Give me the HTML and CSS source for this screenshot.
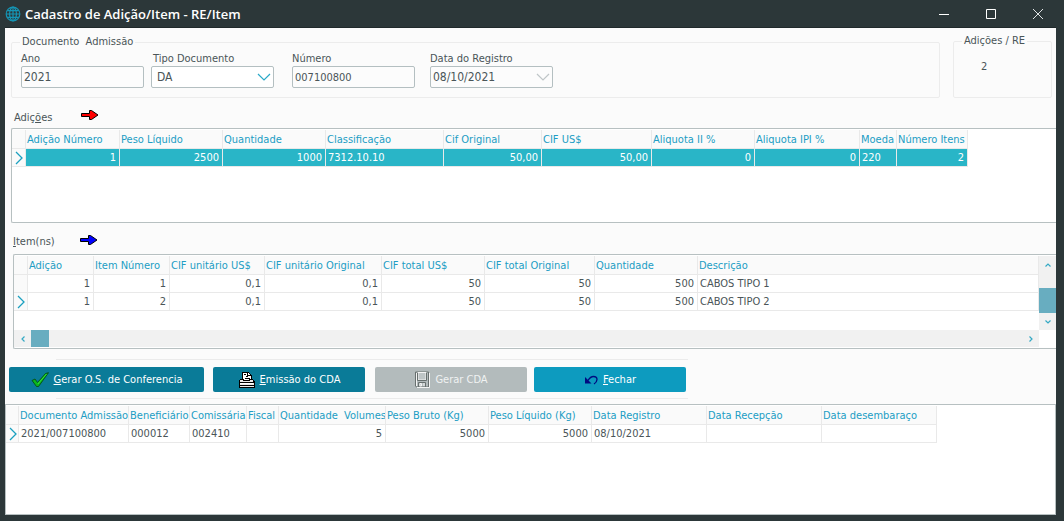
FILE: index.html
```html
<!DOCTYPE html>
<html lang="pt-BR">
<head>
<meta charset="utf-8">
<title>Cadastro de Adição/Item - RE/Item</title>
<link rel="stylesheet" href="styles.css">
</head>
<body>
<header class="titlebar">
  <svg class="globe" width="16" height="16" viewBox="0 0 16 16" aria-hidden="true">
    <g fill="none" stroke="#1595b5" stroke-width="1.2">
      <circle cx="8" cy="8" r="6.8"/><ellipse cx="8" cy="8" rx="3.4" ry="6.8"/>
      <path d="M8 1v14M1 8h14M2.3 4.6h11.4M2.3 11.4h11.4"/>
    </g>
  </svg>
  <h1 class="title">Cadastro de Adição/Item - RE/Item</h1>
  <div class="window-buttons">
    <button type="button" aria-label="Minimizar"><svg width="12" height="12" viewBox="0 0 12 12"><path d="M1 6.5h10" stroke="#fff" fill="none"/></svg></button>
    <button type="button" aria-label="Maximizar"><svg width="12" height="12" viewBox="0 0 12 12"><path d="M1.5 1.5h9v9h-9z" stroke="#fff" fill="none"/></svg></button>
    <button type="button" aria-label="Fechar janela"><svg width="12" height="12" viewBox="0 0 12 12"><path d="M1 1l10 10M11 1L1 11" stroke="#dfe3e4" fill="none"/></svg></button>
  </div>
</header>
<main class="content">
  <div class="top">
    <fieldset class="group group-main">
      <legend>Documento&nbsp; Admissão</legend>
      <div class="fields">
        <div class="field"><label for="ano">Ano</label><input id="ano" class="box" value="2021"></div>
        <div class="field field-type"><label for="tipo">Tipo Documento</label>
          <span class="combo"><select id="tipo" class="box"><option>DA</option></select>
          <svg class="chevron" width="14" height="8" viewBox="0 0 14 8"><path d="M1 1l6 6 6-6" fill="none" stroke="#2aa9c8" stroke-width="1.2"/></svg></span></div>
        <div class="field field-number"><label for="numero">Número</label><input id="numero" class="box box-code" value="007100800"></div>
        <div class="field field-date"><label for="data">Data do Registro</label>
          <span class="combo"><input id="data" class="box box-date" value="08/10/2021">
          <svg class="chevron" width="14" height="8" viewBox="0 0 14 8"><path d="M1 1l6 6 6-6" fill="none" stroke="#bfc6c8" stroke-width="1.2"/></svg></span></div>
      </div>
    </fieldset>
    <fieldset class="group group-count">
      <legend>Adições / RE</legend>
      <output class="count">2</output>
    </fieldset>
  </div>

  <div class="section-head section-additions">
    <h2>Adiç<u>õ</u>es</h2>
    <svg class="arrow" width="18" height="10" viewBox="0 0 18 10"><path d="M.5 3.5h8V.5h2l6.500 4.500-6.500 4.500h-2v-3h-8z" fill="#f00" stroke="#000"/></svg>
  </div>
  <div class="grid grid-additions">
    <table>
      <colgroup><col class="c-mark"><col class="c-94"><col class="c-103"><col class="c-103"><col class="c-118"><col class="c-98"><col class="c-110"><col class="c-103"><col class="c-105"><col class="c-37"><col class="c-71"></colgroup>
      <thead><tr><td></td><th>Adição Número</th><th>Peso Líquido</th><th>Quantidade</th><th>Classificação</th><th>Cif Original</th><th>CIF US$</th><th>Aliquota II %</th><th>Aliquota IPI %</th><th>Moeda</th><th>Número Itens</th></tr></thead>
      <tbody><tr class="selected"><td class="mark"><svg width="8" height="14" viewBox="0 0 8 14"><path d="M1 1l6 6-6 6" fill="none" stroke="#1ba0c0" stroke-width="1.3"/></svg></td><td class="num">1</td><td class="num">2500</td><td class="num">1000</td><td>7312.10.10</td><td class="num">50,00</td><td class="num">50,00</td><td class="num">0</td><td class="num">0</td><td>220</td><td class="num">2</td></tr></tbody>
    </table>
  </div>

  <div class="section-head section-items">
    <h2><u>I</u>tem(ns)</h2>
    <svg class="arrow" width="18" height="10" viewBox="0 0 18 10"><path d="M.5 3.500h8V.5h2l6.500 4.500-6.500 4.500h-2v-3h-8z" fill="#00f" stroke="#000"/></svg>
  </div>
  <div class="grid grid-items">
    <table>
      <colgroup><col class="c-mark"><col class="c-66"><col class="c-76"><col class="c-95"><col class="c-117"><col class="c-103"><col class="c-110"><col class="c-103"><col></colgroup>
      <thead><tr><td></td><th>Adição</th><th>Item Número</th><th>CIF unitário US$</th><th>CIF unitário Original</th><th>CIF total US$</th><th>CIF total Original</th><th>Quantidade</th><th>Descrição</th></tr></thead>
      <tbody>
        <tr><td class="mark"></td><td class="num">1</td><td class="num">1</td><td class="num">0,1</td><td class="num">0,1</td><td class="num">50</td><td class="num">50</td><td class="num">500</td><td>CABOS TIPO 1</td></tr>
        <tr><td class="mark"><svg width="8" height="14" viewBox="0 0 8 14"><path d="M1 1l6 6-6 6" fill="none" stroke="#1ba0c0" stroke-width="1.3"/></svg></td><td class="num">1</td><td class="num">2</td><td class="num">0,1</td><td class="num">0,1</td><td class="num">50</td><td class="num">50</td><td class="num">500</td><td>CABOS TIPO 2</td></tr>
      </tbody>
    </table>
    <div class="vscroll">
      <button type="button" aria-label="Rolar para cima"><svg width="6" height="4" viewBox="0 0 6 4"><path d="M.5 3.500L3 1l2.500 2.500" fill="none" stroke="#35a9c4" stroke-width="1.2"/></svg></button>
      <div class="vtrack"><div class="vthumb"></div></div>
      <button type="button" aria-label="Rolar para baixo"><svg width="6" height="4" viewBox="0 0 6 4"><path d="M.5.5L3 3 5.500.5" fill="none" stroke="#35a9c4" stroke-width="1.2"/></svg></button>
    </div>
    <div class="hscroll">
      <button type="button" aria-label="Rolar para a esquerda"><svg width="4" height="6" viewBox="0 0 4 6"><path d="M3.500.5L1 3l2.500 2.500" fill="none" stroke="#35a9c4" stroke-width="1.2"/></svg></button>
      <div class="htrack"><div class="hthumb"></div></div>
      <button type="button" aria-label="Rolar para a direita"><svg width="4" height="6" viewBox="0 0 4 6"><path d="M.5.5L3 3 .5 5.500" fill="none" stroke="#35a9c4" stroke-width="1.2"/></svg></button>
    </div>
  </div>

  <div class="actions">
    <button type="button" class="action action-wide">
      <svg width="18" height="16" viewBox="0 0 18 16"><path d="M1 8.500l3-1.500 2.500 3.500L14.500 1.500 17.500.7 7.500 14.500H5.500z" fill="#0ab51c" stroke="#04450c" stroke-width=".8"/><path d="M6.800 12L15.500 2" stroke="#35e33a" fill="none"/></svg>
      <span><u>G</u>erar O.S. de Conferencia</span></button>
    <button type="button" class="action action-print">
      <svg width="17" height="17" viewBox="0 0 17 17" shape-rendering="crispEdges"><path d="M4 1h6l3 3v6H4z" fill="#fff" stroke="#000"/><path d="M9.500 1v3.500H13M5.500 3.500h2M7.500 5.500h2M6.500 7.500h5" stroke="#000" fill="none"/><path d="M2.500 8.500h3v1h6v-1h3l1.500 2v5.500H1v-5.500z" fill="#e8e8e8" stroke="#000"/><path d="M1 11.500h15M1 14.500h15" stroke="#000" fill="none"/><path d="M2 12.500h13" stroke="#fff" fill="none"/></svg>
      <span><u>E</u>missão do CDA</span></button>
    <button type="button" class="action action-save" disabled>
      <svg width="16" height="17" viewBox="0 0 16 17"><path d="M1.500 1h13v15h-12l-1-1z" fill="#b3bbbc" stroke="#68706f"/><path d="M4 1.500h8v7.500H4z" fill="#bec5c6" stroke="#f4f4f4"/><path d="M3.500 2v7.500h9V2M4.500 16v-4.500h7V16" fill="none" stroke="#68706f"/><path d="M6 12.500h1.500V15H6zM10 12v3M15.500 2v14.500H3M2.500 2v13" fill="none" stroke="#f4f4f4"/></svg>
      <span>Gerar CDA</span></button>
    <button type="button" class="action action-close">
      <svg width="14" height="10" viewBox="0 0 14 10"><path d="M1 2v6.500h6.500z" fill="#000b80"/><path d="M4 5.500C5.500 3 7 1.500 9.500 1.500c2.500 0 3.500 1.500 3.500 3 0 2-1.500 3.500-3 4.500" fill="none" stroke="#000b80" stroke-width="1.300"/></svg>
      <span><u>F</u>echar</span></button>
  </div>

  <div class="grid grid-documents">
    <table>
      <colgroup><col class="c-mark"><col class="c-110"><col class="c-61"><col class="c-57"><col class="c-32"><col class="c-107"><col class="c-103"><col class="c-103"><col class="c-115"><col class="c-115"><col class="c-115"></colgroup>
      <thead><tr><td></td><th>Documento Admissão</th><th>Beneficiário</th><th>Comissária</th><th>Fiscal</th><th>Quantidade&nbsp; Volumes</th><th>Peso Bruto (Kg)</th><th>Peso Líquido (Kg)</th><th>Data Registro</th><th>Data Recepção</th><th>Data desembaraço</th></tr></thead>
      <tbody><tr><td class="mark"><svg width="8" height="14" viewBox="0 0 8 14"><path d="M1 1l6 6-6 6" fill="none" stroke="#1ba0c0" stroke-width="1.3"/></svg></td><td>2021/007100800</td><td>000012</td><td>002410</td><td></td><td class="num">5</td><td class="num">5000</td><td class="num">5000</td><td>08/10/2021</td><td></td><td></td></tr></tbody>
    </table>
  </div>
</main>
</body>
</html>
```

FILE: styles.css
```css
* { box-sizing: border-box; }
body {
  margin: 0;
  min-height: 100vh;
  display: flex;
  flex-direction: column;
  padding: 0 8px 6px 5px;
  background: #2c3739;
  color: #4a5558;
  font: 11px/14px "DejaVu Sans Condensed", "Noto Sans", sans-serif;
}
button, input, select { font: inherit; color: inherit; margin: 0; }
svg { display: block; flex: none; }

.titlebar { display: flex; align-items: center; height: 28px; gap: 4px; border-bottom: 1px solid #20292b; }
.title { margin: 0; flex: 1; font: 600 13px/18px "Open Sans", sans-serif; color: #fff; }
.window-buttons { display: flex; margin-right: -5px; }
.window-buttons button { width: 47px; height: 27px; padding: 0; border: 0; background: none; display: flex; align-items: center; justify-content: center; }

.content { flex: 1; display: flex; flex-direction: column; background: #fbfbfb; }
.top { display: flex; align-items: flex-end; gap: 13px; padding: 6px 4px 0 6px; }
.group { margin: 0; padding: 0; border: 1px solid #ececec; border-radius: 2px; min-width: 0; }
.group-main { flex: 1; }
.group-count { width: 99px; }
.group legend { margin-left: 8px; padding: 0 2px; white-space: pre; }
.fields { display: flex; padding: 3px 9px 9px; }
.field { display: flex; flex-direction: column; width: 123px; }
.field-type { margin-left: 7px; }
.field-type label { padding-left: 2px; }
.field-number { margin-left: 18px; }
.field-date { margin-left: 15px; }
.box { width: 100%; height: 22px; padding: 0 2px; border: 1px solid #b4bfc1; border-radius: 2px; background: #fcfcfc; outline: 0; appearance: none; font-size: 12px; }
.box-code { font-size: 11px; }
.combo { display: grid; align-items: center; }
.combo > * { grid-area: 1 / 1; }
select.box { background: #fff; padding-left: 5px; }
.chevron { justify-self: end; margin-right: 3px; pointer-events: none; }
.count { display: block; padding: 12px 27px 23px; }

.section-head { display: flex; align-items: center; gap: 22px; height: 30px; padding: 9px 8px 0; }
.section-additions { padding-left: 9px; }
.section-items { height: 31px; padding-top: 7px; }
.section-head h2 { width: 45px; margin: 0; font: inherit; }
.section-head .arrow { margin-bottom: 5px; }

.grid { background: #fff; border: 1px solid #b7c0c1; }
.grid-additions { height: 95px; margin-left: 6px; padding: 1px 0; border-right: 0; border-radius: 2px 0 0 2px; overflow: hidden; }
.grid-items { height: 95px; margin-left: 8px; padding: 1px 0; border-right: 0; border-radius: 2px 0 0 2px; display: grid; grid-template: 1fr 17px / 1fr 17px; align-items: start; }
.grid-documents { flex: 1; padding-top: 1px; overflow: hidden; }

table { table-layout: fixed; border-collapse: separate; border-spacing: 0; width: 1px; }
.grid-items table { width: 100%; }
th, td { height: 18px; padding: 0 3px 0 2px; border: solid #e9e9e9; border-width: 0 1px 1px 0; text-align: left; font-weight: 400; line-height: 14px; white-space: pre; overflow: hidden; }
thead th, thead td { height: 19px; background: #fafafa; color: #219dc4; padding: 2px 0 0 1px; }
.mark { background: #fafafa; padding: 0 0 0 3px; }
.num { text-align: right; }
.selected td:not(.mark) { background: #29b5c7; color: #fff; }
.c-mark { width: 14px; }
.grid-documents .c-mark { width: 13px; }
.c-32 { width: 32px; }
.c-37 { width: 37px; }
.c-57 { width: 57px; }
.c-61 { width: 61px; }
.c-66 { width: 66px; }
.c-71 { width: 71px; }
.c-76 { width: 76px; }
.c-94 { width: 94px; }
.c-95 { width: 95px; }
.c-98 { width: 98px; }
.c-103 { width: 103px; }
.c-105 { width: 105px; }
.c-107 { width: 107px; }
.c-110 { width: 110px; }
.c-115 { width: 115px; }
.c-117 { width: 117px; }
.c-118 { width: 118px; }

.vscroll, .hscroll { display: flex; background: #f1f1f1; align-self: stretch; }
.vscroll { flex-direction: column; }
.vscroll button, .hscroll button { width: 17px; height: 17px; padding: 0; border: 0; background: none; display: flex; align-items: center; justify-content: center; }
.vtrack, .htrack { flex: 1; display: flex; }
.vtrack { flex-direction: column; justify-content: flex-end; }
.vthumb { height: 25px; background: #68adc0; }
.hthumb { width: 18px; background: #68adc0; }

.actions { display: flex; align-items: flex-start; padding: 18px 4px 12px; background: linear-gradient(#ebebeb, #ebebeb) 51px 10px / 632px 1px no-repeat, linear-gradient(#ebebeb, #ebebeb) 51px 49px / 632px 1px no-repeat; }
.action { display: flex; align-items: center; justify-content: center; gap: 5px; width: 152px; height: 25px; padding: 0; border: 0; border-radius: 2px; background: #0a7b98; color: #fff; }
.action-wide { width: 195px; }
.action-print { margin-left: 9px; }
.action-save { margin-left: 10px; background: #b3bbbc; color: #f0f2f2; }
.action-close { margin-left: 7px; background: #0d9bbf; }
```
